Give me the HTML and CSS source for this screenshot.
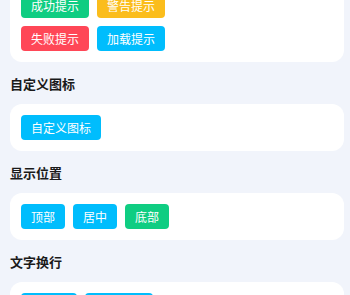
FILE: index.html
```html
<!DOCTYPE html>
<html lang="zh-CN">
<head>
<meta charset="utf-8">
<title>Toast</title>
<link rel="stylesheet" href="styles.css">
</head>
<body>
<div class="page">
  <div class="card first">
    <div class="btns">
      <span class="btn green">成功提示</span>
      <span class="btn yellow">警告提示</span>
      <span class="btn red">失败提示</span>
      <span class="btn blue">加载提示</span>
    </div>
  </div>
  <h2 class="title">自定义图标</h2>
  <div class="card">
    <div class="btns">
      <span class="btn blue">自定义图标</span>
    </div>
  </div>
  <h2 class="title">显示位置</h2>
  <div class="card">
    <div class="btns">
      <span class="btn blue">顶部</span>
      <span class="btn blue">居中</span>
      <span class="btn green">底部</span>
    </div>
  </div>
  <h2 class="title">文字换行</h2>
  <div class="card">
    <div class="btns">
      <span class="btn blue">长文本</span>
      <span class="btn blue">超长文本</span>
    </div>
  </div>
</div>
</body>
</html>
```
FILE: styles.css
```css
html, body {
  margin: 0;
  padding: 0;
  background: #f1f4fb;
  font-family: "Noto Sans CJK SC", "Noto Sans", sans-serif;
}
.page {
  padding: 0 6px 0 10px;
}
.card {
  background: #ffffff;
  border-radius: 12px;
  padding: 11px;
}
.card.first {
  margin-top: -18px;
}
.btns {
  display: flex;
  flex-wrap: wrap;
  gap: 8px;
  width: 160px;
}
.btn {
  display: block;
  height: 25px;
  line-height: 25px;
  padding: 0 10px;
  font-size: 12px;
  color: #ffffff;
  border-radius: 4px;
  white-space: nowrap;
}
.green { background: #0fcd82; }
.yellow { background: #fbbd1c; }
.red { background: #ff4757; }
.blue { background: #00bdfd; }
.title {
  margin: 0;
  padding: 12px 0 10px;
  font-size: 13px;
  line-height: 20px;
  font-weight: bold;
  color: #1a1a1a;
}
```
